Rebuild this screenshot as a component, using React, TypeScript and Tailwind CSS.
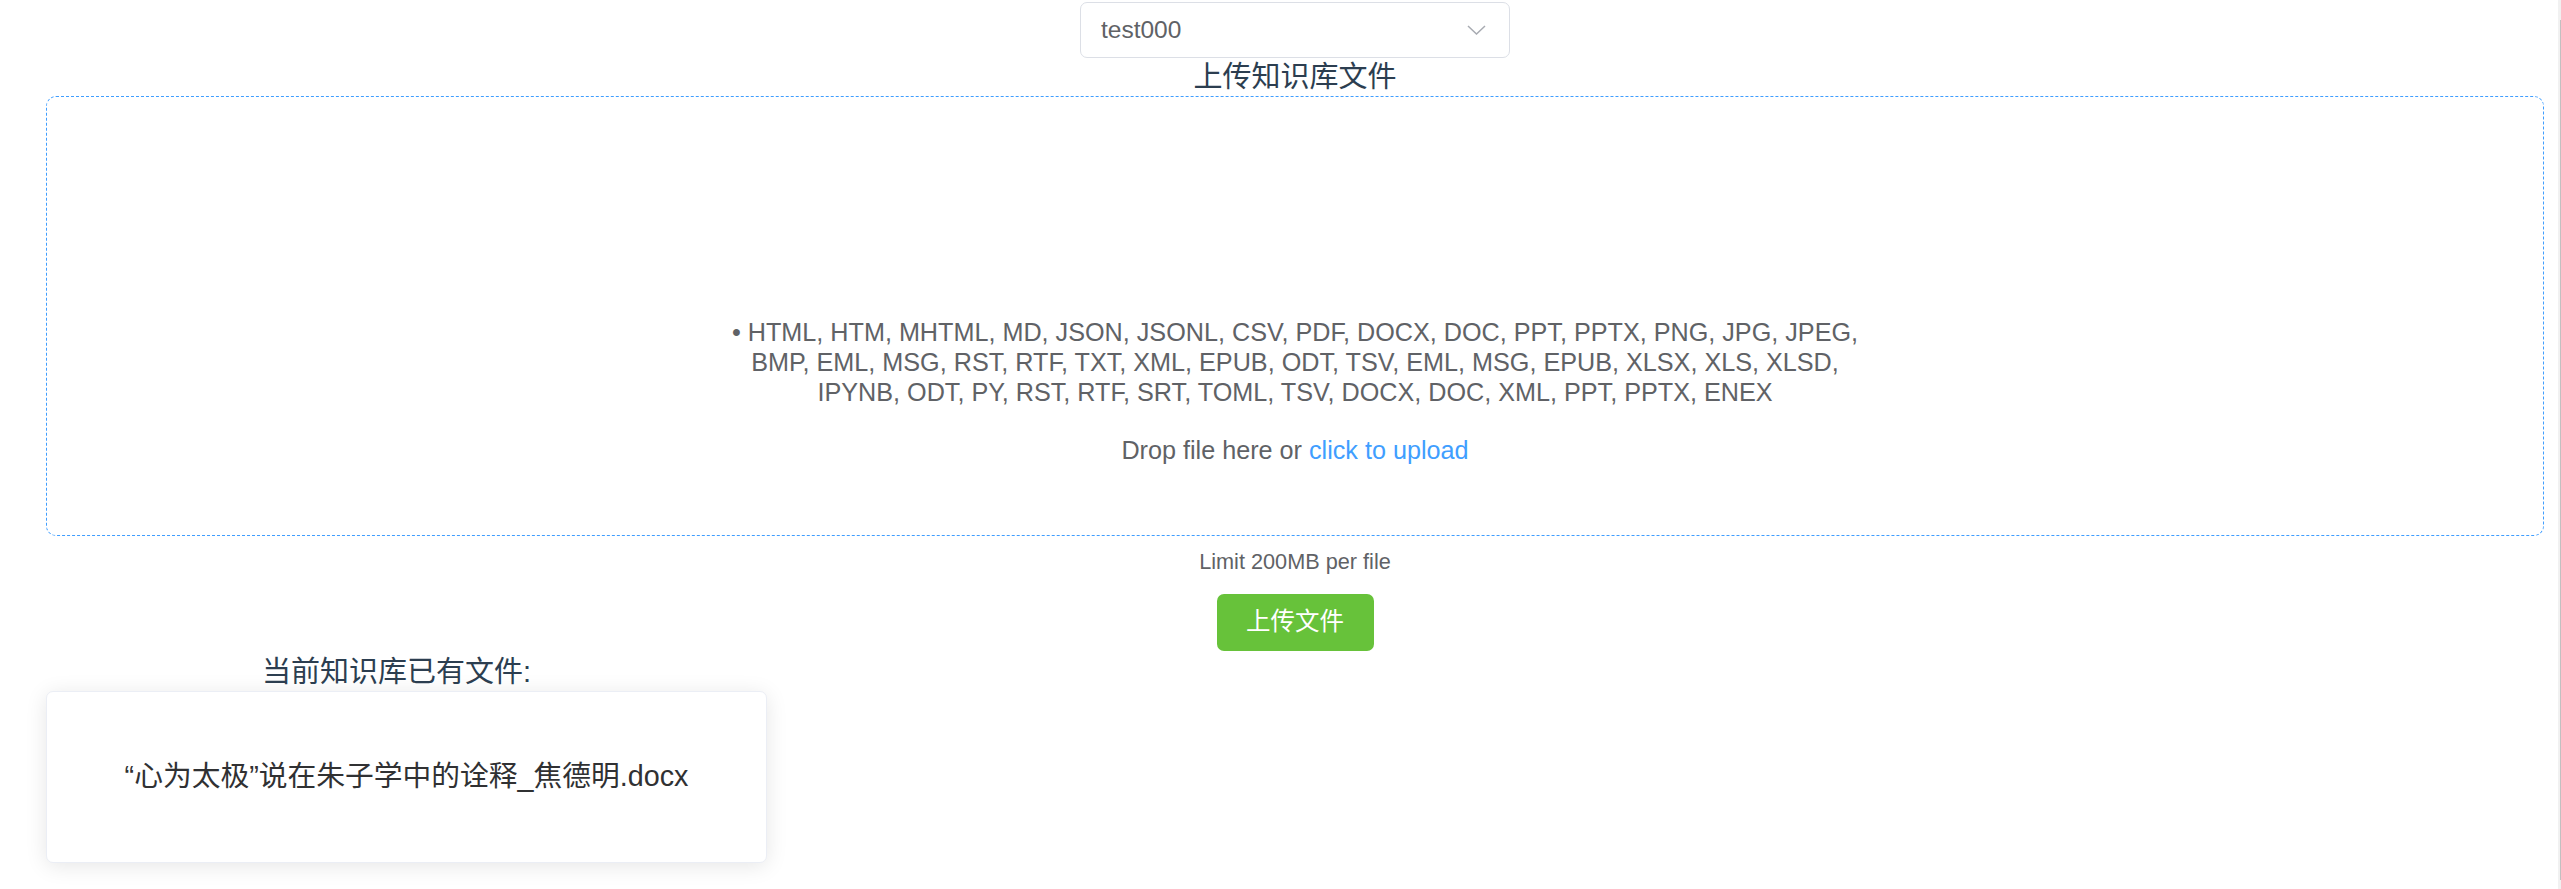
import { useState } from "react"

const formats = [
    "• HTML, HTM, MHTML, MD, JSON, JSONL, CSV, PDF, DOCX, DOC, PPT, PPTX, PNG, JPG, JPEG,",
    "BMP, EML, MSG, RST, RTF, TXT, XML, EPUB, ODT, TSV, EML, MSG, EPUB, XLSX, XLS, XLSD,",
    "IPYNB, ODT, PY, RST, RTF, SRT, TOML, TSV, DOCX, DOC, XML, PPT, PPTX, ENEX"
]

export default function App() {
    const [kb] = useState("test000")
    const [files] = useState<string[]>(["“心为太极”说在朱子学中的诠释_焦德明.docx"])

    return (
        <div
            className="flex min-h-screen bg-white"
            style={{ fontFamily: '"Liberation Sans", "Noto Sans CJK SC", sans-serif' }}
        >
            <div className="flex-1 pl-[46px] pr-[14px] pt-[2px]">
                <div className="flex justify-center">
                    <div className="flex h-[56px] w-[430px] items-center justify-between rounded-[7px] border border-[#dcdfe6] bg-white pl-[20px] pr-[23px]">
                        <span className="text-[24.5px] text-[#606266]">{kb}</span>
                        <svg width="19" height="10" viewBox="0 0 19 10" fill="none">
                            <polyline points="1,1 9.5,9 18,1" stroke="#a8abb2" strokeWidth="1.5" />
                        </svg>
                    </div>
                </div>

                <h2 className="text-center text-[29px] leading-[38px] text-[#2c3e50]">上传知识库文件</h2>

                <div className="flex h-[440px] flex-col items-center rounded-[10px] border border-dashed border-[#409eff] pt-[220px]">
                    <div className="text-center text-[25.2px] leading-[30px] text-[#606266]">
                        {formats.map((line, i) => (
                            <div key={i}>{line}</div>
                        ))}
                    </div>
                    <div className="mt-[28px] text-[25.2px] leading-[30px] text-[#606266]">
                        Drop file here or <span className="text-[#409eff]">click to upload</span>
                    </div>
                </div>

                <div className="mt-[11px] text-center text-[21.7px] leading-[30px] text-[#606266]">Limit 200MB per file</div>

                <div className="mt-[17px] flex justify-center">
                    <button className="h-[57px] w-[157px] rounded-[7px] bg-[#67c23a] text-[24.5px] text-white">上传文件</button>
                </div>

                <div className="mt-[2px] w-[721px]">
                    <h3 className="pr-[20px] text-center text-[29px] leading-[38px] text-[#2c3e50]">当前知识库已有文件:</h3>
                    {files.map((f, i) => (
                        <div
                            key={i}
                            className="flex h-[172px] items-center justify-center rounded-[7px] border border-[#ebeef5] bg-white text-[28.75px] text-[#303133] shadow-[0_3px_21px_0_rgba(0,0,0,0.1)]"
                        >
                            {f}
                        </div>
                    ))}
                </div>
            </div>
            <div className="w-[3px] bg-[#f1f1f1]">
                <div className="ml-[2px] mt-[20px] h-[860px] w-[1px] bg-[#c1c1c1]" />
            </div>
        </div>
    )
}
